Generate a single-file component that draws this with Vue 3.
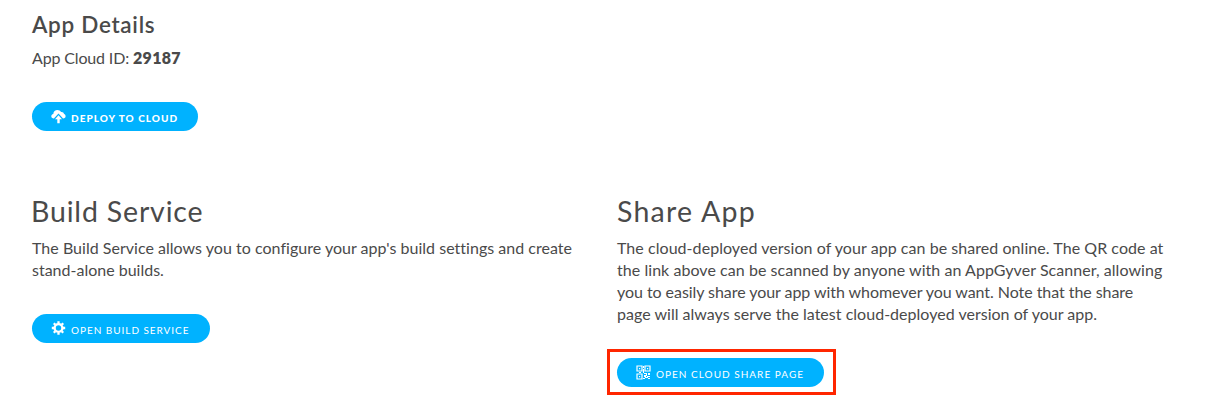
<script setup>
const buildLines = [
  "The Build Service allows you to configure your app's build settings and create",
  'stand-alone builds.',
]
const shareLines = [
  'The cloud-deployed version of your app can be shared online. The QR code at',
  'the link above can be scanned by anyone with an AppGyver Scanner, allowing',
  'you to easily share your app with whomever you want. Note that the share',
  'page will always serve the latest cloud-deployed version of your app.',
]
</script>

<template>
  <main class="page">
    <section class="details">
      <h3>App Details</h3>
      <p class="app-id"><span>App Cloud ID: </span><strong>29187</strong></p>
      <button class="btn deploy">
        <svg width="15" height="15" viewBox="0 0 15 15">
          <path d="M3.2 9.4C1.5 9.6.3 8.6.3 7.2.3 6 1.1 5 2.300 4.900 2.400 2.400 4.300.9 6.400.9c1.700 0 3 .8 3.700 2.200 1.500-.3 2.700.6 2.900 2 1 .3 1.600 1.100 1.600 2.100 0 1.400-1 2.300-2.900 2.200L7.500 5.300z" fill="#fff" />
          <path d="M7.500 4.600 12.300 9.800H9.800V15H5.200V9.800H2.700z" fill="#00b2ff" />
          <path d="M7.500 6.200 11 10.200H8.700V14.200H6.300V10.200H4z" fill="#fff" />
        </svg>
        <span>DEPLOY TO CLOUD</span>
      </button>
    </section>

    <div class="columns">
      <section class="build">
        <h2>Build Service</h2>
        <p><span v-for="(line, i) in buildLines" :key="i" class="line" :class="'b' + i">{{ line }}</span></p>
        <button class="btn open-build">
          <svg width="15" height="15" viewBox="0 0 15 15">
            <circle cx="7.500" cy="7" r="3.900" fill="none" stroke="#fff" stroke-width="2.400" />
            <path d="M7.500.3v2.200M7.500 11.500v2.200M.8 7H3M12 7h2.200M2.800 2.300l1.500 1.500M10.700 10.200l1.500 1.500M2.800 11.700l1.500-1.500M10.700 3.800l1.500-1.500" stroke="#fff" stroke-width="2.300" />
          </svg>
          <span>OPEN BUILD SERVICE</span>
        </button>
      </section>

      <section class="share">
        <h2>Share App</h2>
        <p><span v-for="(line, i) in shareLines" :key="i" class="line" :class="'s' + i">{{ line }}</span></p>
        <div class="highlight">
          <button class="btn open-share">
            <svg width="15" height="15" viewBox="0 0 15 15">
              <g fill="none" stroke="#fff" stroke-width="1.200">
                <path d="M1 1h5v5H1zM9 1h5v5H9zM1 9h5v5H1z" />
              </g>
              <path d="M3 3h1.200v1.200H3zM11 3h1.200v1.200H11zM3 11h1.200v1.200H3zM7 1h1v2H7zM7 4h1v4H7zM8 8h3v1H8zM12 8h2v2h-2zM8 10h2v2H8zM10 9h1v2h-1zM11 11h3v1h-3zM9 12h3v1H9zM7 13h2v1H7zM12 13h2v1h-2zM3 7h2v1H3z" fill="#fff" />
            </svg>
            <span>OPEN CLOUD SHARE PAGE</span>
          </button>
        </div>
      </section>
    </div>
  </main>
</template>

<style>
body {
  background: #fff;
}
</style>

<style scoped>
.page {
  box-sizing: border-box;
  height: 418px;
  padding: 10px 32px 0;
  overflow: hidden;
  color: #4a4a4a;
  font-family: Lato, "Liberation Sans", sans-serif;
}
h2,
h3,
p {
  margin: 0;
}
h3 {
  font-size: 22.5px;
  line-height: 30px;
  font-weight: 600;
  letter-spacing: 0.700px;
}
.app-id {
  margin-top: 7px;
  font-size: 16px;
  line-height: 22px;
  white-space: pre;
  letter-spacing: -0.150px;
}
.app-id strong {
  font-weight: 800;
  letter-spacing: 0.300px;
}
.btn {
  display: flex;
  align-items: center;
  box-sizing: border-box;
  height: 29px;
  padding: 0 0 0 19px;
  border: 0;
  border-radius: 15px;
  background: #00b2ff;
  color: #fff;
  font-family: inherit;
  font-size: 10px;
  line-height: 12px;
  white-space: nowrap;
}
.btn svg {
  flex: none;
  margin-right: 5px;
}
.btn span {
  margin-top: 2px;
}
.deploy {
  width: 166px;
  margin-top: 33px;
  font-weight: 900;
  letter-spacing: 1.030px;
}
.open-build {
  width: 178px;
  margin-top: 33px;
  letter-spacing: 0.960px;
}
.open-share {
  width: 207px;
  letter-spacing: 1.020px;
}
.columns {
  display: grid;
  grid-template-columns: 585px 1fr;
  margin-top: 60px;
}
h2 {
  margin-left: -1px;
  font-size: 28.5px;
  line-height: 40px;
  font-weight: 400;
  letter-spacing: 0.830px;
}
.share h2 {
  margin-left: 0;
  letter-spacing: 1.250px;
}
.columns p {
  margin-top: 6px;
  font-size: 16px;
  line-height: 22px;
}
.line {
  display: block;
  width: max-content;
  white-space: nowrap;
}
.b0 {
  letter-spacing: 0.025px;
}
.s0,
.s1 {
  letter-spacing: 0.052px;
}
.s2 {
  letter-spacing: -0.055px;
}
.s3 {
  letter-spacing: 0.020px;
}
.highlight {
  box-sizing: border-box;
  width: 229px;
  height: 46px;
  margin: 24px 0 0 -10px;
  padding: 6px 7px;
  border: 3px solid #ff2600;
}
</style>
